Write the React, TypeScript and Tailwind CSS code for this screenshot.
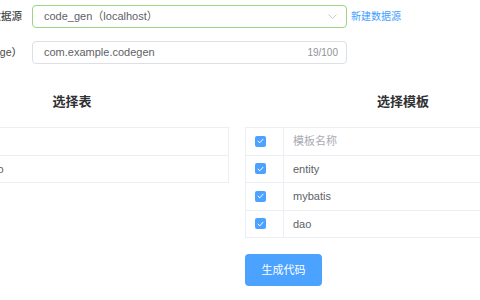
import React from 'react'

const font = { fontFamily: '"Liberation Sans", "Noto Sans CJK SC", sans-serif' }

const templates = ['entity', 'mybatis', 'dao']

function Check() {
    return (
        <span className="flex h-[11px] w-[11px] items-center justify-center rounded-[2px] bg-[#4ba2ff]">
            <svg width="7" height="6" viewBox="0 0 7 6" fill="none">
                <path d="M1 3.2 L2.8 4.8 L6 1.2" stroke="white" strokeWidth="1" strokeLinecap="round" strokeLinejoin="round" />
            </svg>
        </span>
    )
}

function Row({ children, head }: { children?: React.ReactNode; head?: boolean }) {
    return (
        <div className="flex h-[27.5px] border-b border-[#ebeef5]">
            <div className="flex w-[38px] shrink-0 items-center border-r border-[#ebeef5] pl-[9px]">
                <Check />
            </div>
            <div className={`flex items-center pl-[9px] text-[11px] ${head ? 'text-[#a8abb2]' : 'text-[#606266]'}`}>
                {children}
            </div>
        </div>
    )
}

export default function App() {
    return (
        <div className="h-[300px] w-[480px] overflow-hidden bg-white" style={font}>
            <div className="-ml-[85px] w-[646px] pt-[5px]">
                {/* form */}
                <div className="flex h-[23px] items-center">
                    <label className="w-[107px] shrink-0 text-right text-[10.5px] font-medium text-[#4a4a4a]">选择数据源</label>
                    <div className="ml-[10px] flex h-[23px] w-[315px] items-center justify-between rounded-[4px] border border-[#9bd680] pl-[11px] pr-[9px] text-[11px] text-[#606266]">
                        <span>code_gen（localhost）</span>
                        <svg width="9" height="5" viewBox="0 0 9 5" fill="none">
                            <path d="M0.5 0.5 L4.5 4.5 L8.5 0.5" stroke="#c0c4cc" strokeWidth="0.9" />
                        </svg>
                    </div>
                    <a className="ml-[4px] text-[10px] text-[#409eff]">新建数据源</a>
                </div>
                <div className="mt-[13px] flex h-[23px] items-center">
                    <label className="w-[107px] shrink-0 text-right text-[10.5px] font-medium text-[#4a4a4a]">包名（package）</label>
                    <div className="ml-[10px] flex h-[23px] w-[315px] items-center justify-between rounded-[4px] border border-[#dcdfe6] pl-[11px] pr-[8px] text-[11px] text-[#606266]">
                        <span>com.example.codegen</span>
                        <span className="text-[10px] text-[#909399]">19/100</span>
                    </div>
                </div>

                {/* tables */}
                <div className="mt-[29px] flex gap-[16px]">
                    <div className="w-[314px]">
                        <h3 className="text-center text-[13px] font-bold leading-[18px] text-[#303133]">选择表</h3>
                        <div className="mt-[16px] border-r border-t border-[#ebeef5]">
                            <Row head>表名</Row>
                            <Row><span className="pl-[5px]">t_demo</span></Row>
                        </div>
                    </div>
                    <div className="w-[316px]">
                        <h3 className="text-center text-[13px] font-bold leading-[18px] text-[#303133]">选择模板</h3>
                        <div className="mt-[16px] border-l border-t border-[#ebeef5]">
                            <Row head>模板名称</Row>
                            {templates.map(t => (
                                <Row key={t}>{t}</Row>
                            ))}
                        </div>
                        <button className="mt-[16px] h-[32px] w-[77px] rounded-[4px] bg-[#4ba2ff] text-[11px] text-white">生成代码</button>
                    </div>
                </div>
            </div>
        </div>
    )
}
